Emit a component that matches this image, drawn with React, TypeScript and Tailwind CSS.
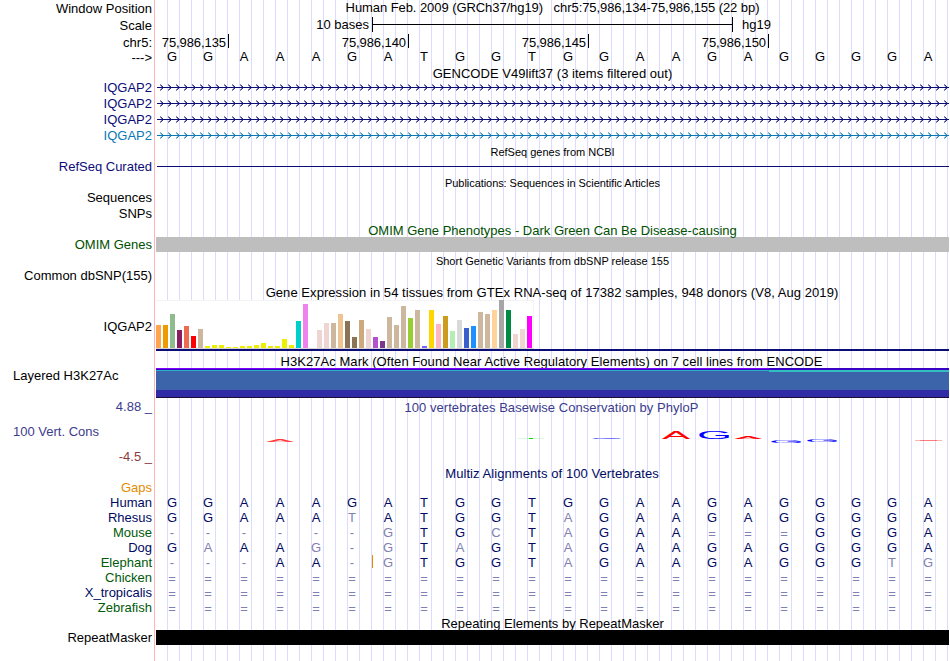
import React from 'react';

interface Label {
  text: string;
  height: string;
  color?: string;
  left?: boolean;
}

interface LogoLetter {
  base: string;
  x: number;
  y: number;
  width: number;
  height: number;
  color: string;
}

const LABELS: Label[] = [
  { text: 'Window Position', height: 'h-[17px]' },
  { text: 'Scale', height: 'h-[17px]' },
  { text: 'chr5:', height: 'h-[15px]' },
  { text: '--->', height: 'h-[30px]' },
  { text: 'IQGAP2', height: 'h-[16px]', color: 'text-[#0c0c78]' },
  { text: 'IQGAP2', height: 'h-[16px]', color: 'text-[#0c0c78]' },
  { text: 'IQGAP2', height: 'h-[16px]', color: 'text-[#0c0c78]' },
  { text: 'IQGAP2', height: 'h-[31px]', color: 'text-[#0c78b4]' },
  { text: 'RefSeq Curated', height: 'h-[31px]', color: 'text-[#0c0c78]' },
  { text: 'Sequences', height: 'h-[16px]' },
  { text: 'SNPs', height: 'h-[31px]' },
  { text: 'OMIM Genes', height: 'h-[31px]', color: 'text-[#005000]' },
  { text: 'Common dbSNP(155)', height: 'h-[51px]' },
  { text: 'IQGAP2', height: 'h-[49px]' },
  { text: 'Layered H3K27Ac', height: 'h-[31px]', left: true },
  { text: '4.88 _', height: 'h-[25px]', color: 'text-[#3c3c8c]' },
  { text: '100 Vert. Cons', height: 'h-[25px]', color: 'text-[#3c3c8c]', left: true },
  { text: '-4.5 _', height: 'h-[31px]', color: 'text-[#8c3c3c]' },
  { text: 'Gaps', height: 'h-[15px]', color: 'text-[#e68a00]' },
  { text: 'Human', height: 'h-[15px]', color: 'text-[#000a64]' },
  { text: 'Rhesus', height: 'h-[15px]', color: 'text-[#000a64]' },
  { text: 'Mouse', height: 'h-[15px]', color: 'text-[#005a0a]' },
  { text: 'Dog', height: 'h-[15px]', color: 'text-[#000a64]' },
  { text: 'Elephant', height: 'h-[15px]', color: 'text-[#005a0a]' },
  { text: 'Chicken', height: 'h-[15px]', color: 'text-[#005a0a]' },
  { text: 'X_tropicalis', height: 'h-[15px]', color: 'text-[#000a64]' },
  { text: 'Zebrafish', height: 'h-[30px]', color: 'text-[#005a0a]' },
  { text: 'RepeatMasker', height: 'h-[15px]' },
];

const SEQUENCE = 'GGAAAGATGGTGGAAGAGGGGA';

// Lower case marks a base that differs from human
const ALIGNMENTS = [
  'GGAAAGATGGTGGAAGAGGGGA',
  'GGAAAtATGGTaGAAGAGGGGA',
  '------gTGcTaGAA===GGGA',
  'GaAAg-gTaGTaGAAGAGGGGA',
  '---AA-gTGGTaGAAGAGGGtg',
  '======================',
  '======================',
  '======================',
];

const POSITIONS = ['75,986,135', '75,986,140', '75,986,145', '75,986,150'];

const GENE_COLORS = ['#0c0c78', '#0c0c78', '#0c0c78', '#0c78b4'];

// [height, color] per GTEx tissue
const TISSUES: [number, string][] = [
  [23, '#ffa54f'], [23, '#ee9a00'], [34, '#8fbc8f'], [18, '#8b1c62'], [22, '#ee6a50'],
  [12, '#ff0000'], [19, '#cdb79e'], [2, '#eeee00'], [3, '#eeee00'], [3, '#eeee00'],
  [1, '#eeee00'], [1, '#eeee00'], [2, '#eeee00'], [2, '#eeee00'], [3, '#eeee00'],
  [5, '#eeee00'], [2, '#eeee00'], [2, '#eeee00'], [9, '#eeee00'], [3, '#eeee00'],
  [27, '#00cdcd'], [44, '#ee82ee'], [0, '#9ac0cd'], [18, '#eed5d2'], [25, '#eed5d2'],
  [25, '#cdb79e'], [34, '#eec591'], [27, '#8b7355'], [11, '#8b7355'], [28, '#cdaa7d'],
  [19, '#eed5d2'], [11, '#b452cd'], [7, '#7a378b'], [31, '#cdb79e'], [23, '#cdb79e'],
  [42, '#cdb79e'], [30, '#9acd32'], [38, '#cdb79e'], [2, '#7a67ee'], [38, '#ffd700'],
  [24, '#ffb6c1'], [32, '#cd9b1d'], [17, '#b4eeb4'], [28, '#d9d9d9'], [20, '#3a5fcd'],
  [22, '#1e90ff'], [36, '#cdb79e'], [34, '#cdb79e'], [38, '#ffd39b'], [48, '#a6a6a6'],
  [38, '#008b45'], [14, '#eed5d2'], [19, '#eed5d2'], [32, '#ff00ff'],
];

// x and y are the lower left corner of the stretched letter
const LOGO: LogoLetter[] = [
  { base: 'A', x: 110, y: 27, width: 28, height: 2, color: '#ff3c3c' },
  { base: 'G', x: 434, y: 24, width: 31, height: 1, color: '#0000ff' },
  { base: 'A', x: 506, y: 24, width: 28, height: 8, color: '#ff0000' },
  { base: 'G', x: 541, y: 24, width: 32, height: 7, color: '#0000ff' },
  { base: 'A', x: 578, y: 24, width: 28, height: 3, color: '#ff0000' },
  { base: 'G', x: 613, y: 28, width: 32, height: 3, color: '#0000ff' },
  { base: 'G', x: 649, y: 27, width: 32, height: 2, color: '#0000ff' },
];

const BaseRow: React.FC<{ bases: string; color: string }> = ({ bases, color }) => (
  <div className={`-ml-[2px] flex h-[15px] ${color}`}>
    {bases.split('').map((base, i) => {
      const matches = /[A-Z]/.test(base);
      return (
        <span
          key={i}
          className={`w-9 shrink-0 text-center ${matches ? '' : 'text-[#8080b2]'} ${base === '=' ? 'pt-px' : ''}`}
        >
          {base.toUpperCase()}
        </span>
      );
    })}
  </div>
);

const Title: React.FC<{ children: React.ReactNode; className?: string }> = ({ children, className = '' }) => (
  <div className={`text-center whitespace-pre ${className}`}>{children}</div>
);

const GeneLine: React.FC<{ color: string }> = ({ color }) => (
  <svg className="block h-4 w-[793px]" viewBox="0 0 793 16" shapeRendering="crispEdges">
    <rect x="1" y="7" width="792" height="1" fill={color} />
    {Array.from({ length: 99 }, (_, i) => (
      <g key={i} transform={`translate(${3 + i * 8} 0)`} fill={color}>
        <path d="M1 4h1v1h-1zM1 5h1v1h-1zM2 6h1v1h-1zM2 8h1v1h-1zM1 9h1v1h-1zM1 10h1v1h-1z" opacity="0.5" />
        <path d="M2 5h1v1h-1zM3 6h1v1h-1zM3 8h1v1h-1zM2 9h1v1h-1z" opacity="0.85" />
      </g>
    ))}
  </svg>
);

const ScaleBar = () => (
  <div className="flex h-[19px] pt-[2px]">
    <div className="w-[213px] text-right">10 bases</div>
    <div className="ml-[3px] flex h-[15px] w-[361px] items-center border-x border-black">
      <div className="h-px w-full bg-black"></div>
    </div>
    <div className="ml-[9px]">hg19</div>
  </div>
);

const Ruler = () => (
  <div className="flex h-[15px] tracking-[-0.08px]">
    {POSITIONS.map((position, i) => (
      <div
        key={position}
        className={`flex h-[14px] justify-end border-r border-black pt-px pr-[2px] ${i === 0 ? 'w-[73px]' : 'w-[180px]'}`}
      >
        {position}
      </div>
    ))}
  </div>
);

const ExpressionGraph = () => (
  <div>
    <div className="flex h-[49px] w-[378px] items-end gap-[2px] border-t border-r border-b border-[#f4f4f4] border-b-[#d4d4d4] bg-white">
      {TISSUES.map(([height, color], i) => (
        <div key={i} className="w-[5px] shrink-0" style={{ height, backgroundColor: color }}></div>
      ))}
    </div>
    <div className="h-[2px] bg-[#0c0c78]"></div>
  </div>
);

const HistoneSignal = () => (
  <div>
    <div className="flex h-[3px]">
      <div className="w-[613px]">
        <div className="h-px bg-[#8000ff]"></div>
        <div className="h-px bg-[#3a00c8]"></div>
        <div className="h-px bg-[#28b4c8]"></div>
      </div>
      <div className="flex-1">
        <div className="h-[2px] bg-[#3a00c8]"></div>
        <div className="h-px bg-[#32bebe]"></div>
      </div>
    </div>
    <div className="flex h-[19px] justify-end bg-[#3c64aa]">
      <div className="h-px w-[180px] bg-[#32bebe]"></div>
    </div>
    <div className="h-[7px] bg-[#302ca6]"></div>
    <div className="h-px bg-[#1e0a32]"></div>
  </div>
);

const ConservationLogo = () => (
  <svg className="block h-[51px] w-[793px]" viewBox="0 0 793 51">
    {LOGO.map(({ base, x, y, width, height, color }) => (
      <text
        key={x}
        fill={color}
        fontFamily="Liberation Sans"
        fontSize="10"
        transform={`translate(${x} ${y}) scale(${width / (base === 'G' ? 7.1 : 6.6)} ${height / 6.9})`}
      >
        {base}
      </text>
    ))}
    {/* Scores close to zero flatten to a single line */}
    <rect x="362" y="23" width="26" height="1" fill="#00e600" opacity="0.15" />
    <rect x="373" y="23" width="4" height="1" fill="#00e600" />
    <rect x="759" y="25" width="27" height="1" fill="#ff0000" opacity="0.3" />
    <rect x="764" y="25" width="17" height="1" fill="#ff0000" opacity="0.3" />
  </svg>
);

const TrackLabels = () => (
  <div className="w-[154px] shrink-0 pt-px pr-[2px]">
    {LABELS.map((label, i) => (
      <div
        key={i}
        className={`whitespace-pre ${label.height} ${label.color || ''} ${label.left ? 'pl-[13px] text-left' : 'text-right'}`}
      >
        {label.text}
      </div>
    ))}
  </div>
);

const Tracks = () => (
  <div className="h-[661px] w-[793px] shrink-0 bg-[repeating-linear-gradient(to_right,transparent_0px,transparent_11px,#dcdcff_11px,#dcdcff_12px)]">
    <Title className="h-[15px] tracking-[-0.07px]">
      {'Human Feb. 2009 (GRCh37/hg19)   chr5:75,986,134-75,986,155 (22 bp)'}
    </Title>
    <ScaleBar />
    <Ruler />
    <BaseRow bases={SEQUENCE} color="text-black" />
    <Title className="h-4 pt-[2px] tracking-[0.03px]">GENCODE V49lift37 (3 items filtered out)</Title>
    {GENE_COLORS.map((color, i) => (
      <GeneLine key={i} color={color} />
    ))}
    <Title className="mt-[2px] h-5 text-[11px] leading-3">RefSeq genes from NCBI</Title>
    <div className="ml-px h-px bg-[#0c0c78]"></div>
    <Title className="mt-[10px] h-[46px] text-[11px] leading-3 tracking-[-0.06px]">
      Publications: Sequences in Scientific Articles
    </Title>
    <Title className="h-[14px] text-[#005000]">OMIM Gene Phenotypes - Dark Green Can Be Disease-causing</Title>
    <div className="h-[15px] bg-[#bebebe]"></div>
    <Title className="mt-[3px] h-[30px] text-[11px] leading-3">Short Genetic Variants from dbSNP release 155</Title>
    <Title className="h-[15px] pr-px tracking-[0.06px]">
      Gene Expression in 54 tissues from GTEx RNA-seq of 17382 samples, 948 donors (V8, Aug 2019)
    </Title>
    <ExpressionGraph />
    <Title className="mt-[3px] h-[14px] pr-[2px] tracking-[0.05px]">
      H3K27Ac Mark (Often Found Near Active Regulatory Elements) on 7 cell lines from ENCODE
    </Title>
    <HistoneSignal />
    <Title className="mt-[2px] h-[15px] pr-[2px] tracking-[0.04px] text-[#3c3c8c]">
      100 vertebrates Basewise Conservation by PhyloP
    </Title>
    <ConservationLogo />
    <Title className="h-[29px] pr-px tracking-[0.07px] text-[#000a64]">Multiz Alignments of 100 Vertebrates</Title>
    <div className="relative">
      {ALIGNMENTS.map((bases, i) => (
        <BaseRow key={i} bases={bases} color="text-[#000a64]" />
      ))}
      {/* Insertion mark in the elephant row */}
      <div className="absolute top-[60px] left-[216px] h-[13px] w-px bg-[#e68a00]"></div>
    </div>
    <Title className="mt-px h-[14px]">Repeating Elements by RepeatMasker</Title>
    <div className="h-[15px] bg-black"></div>
  </div>
);

export default function App() {
  return (
    <div className="flex h-[661px] w-[950px] overflow-hidden bg-white font-['Liberation_Sans',Arial,sans-serif] text-[13px] leading-[15px] text-black">
      <TrackLabels />
      <div className="mr-px w-px shrink-0 bg-[#ffb4b4]"></div>
      <Tracks />
    </div>
  );
}
